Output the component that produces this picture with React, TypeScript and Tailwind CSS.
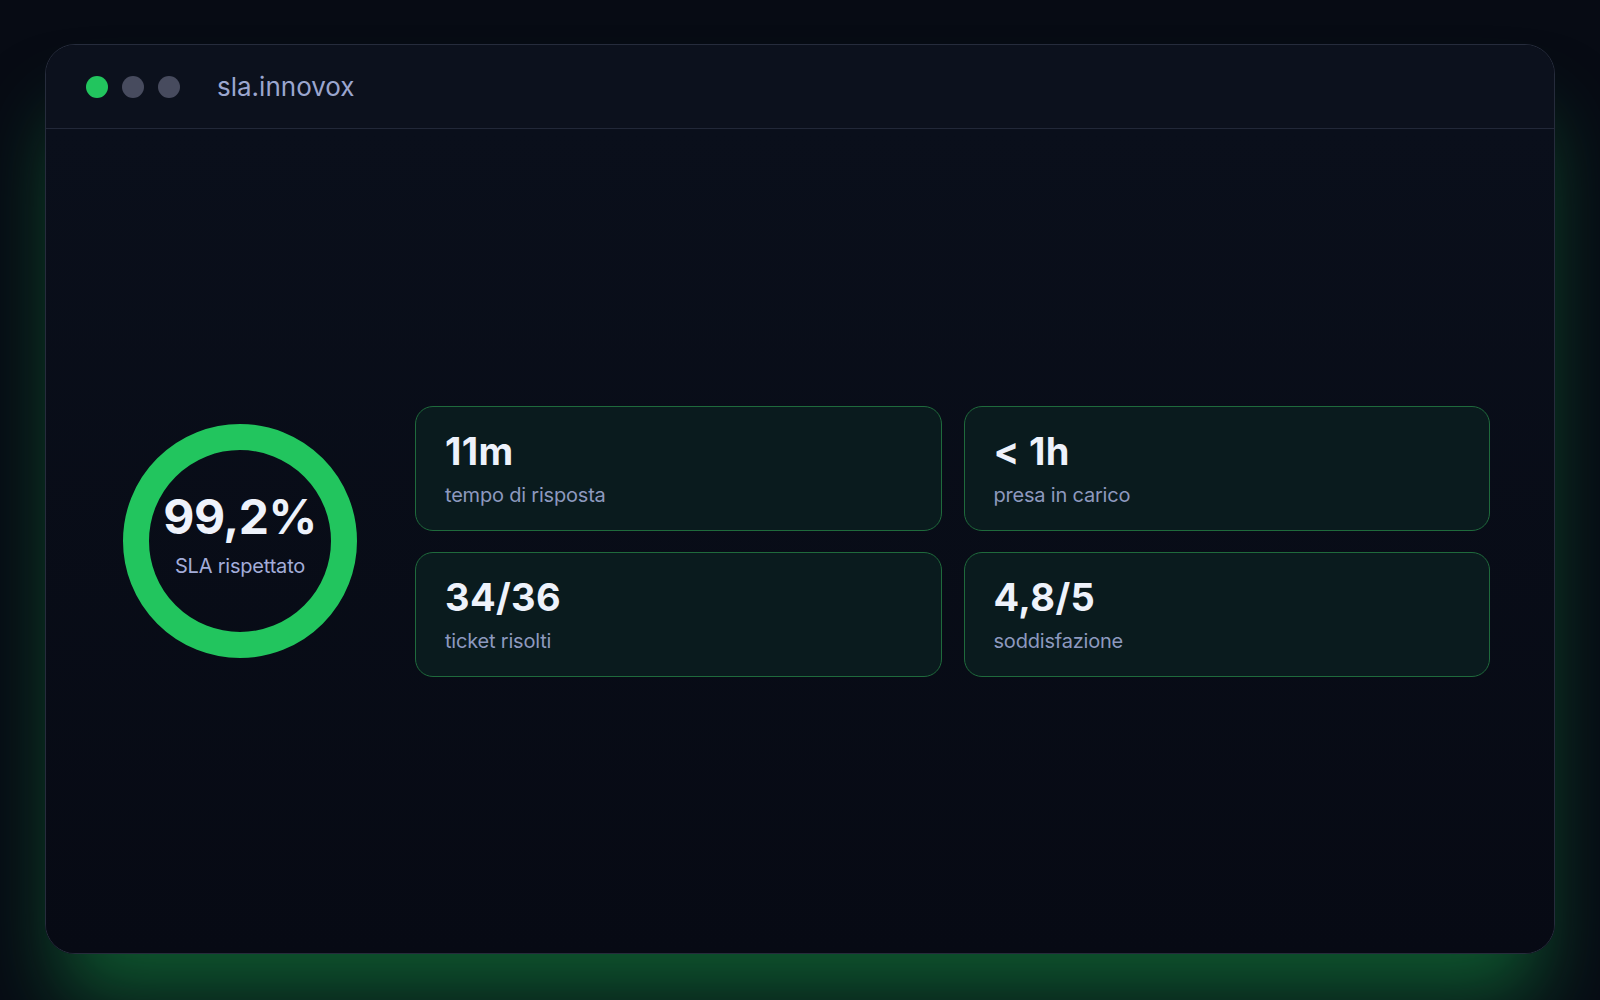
import React from 'react';

const STATS = [
  { value: '11m', label: 'tempo di risposta' },
  { value: '< 1h', label: 'presa in carico' },
  { value: '34/36', label: 'ticket risolti' },
  { value: '4,8/5', label: 'soddisfazione' },
];

const StatCard: React.FC<{ value: string; label: string }> = ({ value, label }) => (
  <div className="h-[125px] rounded-[18px] border border-[#1f6a3c] bg-[#0a1b1e] px-[29px] pt-[25px]">
    <div className="text-[38px] leading-none font-bold tracking-[0.01em] text-[#eef2fb]">{value}</div>
    <div className="mt-[13px] text-[20px] leading-6 tracking-[-0.01em] text-[#8d99bf]">{label}</div>
  </div>
);

const App: React.FC = () => {
  return (
    <div
      className="min-h-screen w-full bg-[#070b14] px-[45px] pt-[44px] pb-[46px]"
      style={{ fontFamily: 'Inter, "Noto Sans", sans-serif' }}
    >
      <div className="flex h-[910px] flex-col overflow-hidden rounded-[30px] border border-[#262c3c] shadow-[0_60px_80px_-16px_rgba(22,163,74,0.5)]">
        {/* title bar */}
        <div className="flex h-[84px] shrink-0 items-center border-b border-[#222838] bg-[#0c111d] px-10">
          <div className="flex gap-[14px]">
            <span className="h-[22px] w-[22px] rounded-full bg-[#22c55e]" />
            <span className="h-[22px] w-[22px] rounded-full bg-[#474b5e]" />
            <span className="h-[22px] w-[22px] rounded-full bg-[#474b5e]" />
          </div>
          <span className="ml-[37px] text-[26px] text-[#9ba6cf]">sla.innovox</span>
        </div>

        {/* dashboard */}
        <div className="flex flex-1 items-center bg-gradient-to-b from-[#0a0f1b] to-[#070a14] px-16">
          <div className="flex w-[260px] shrink-0 justify-center">
            <div className="flex h-[234px] w-[234px] flex-col items-center justify-center rounded-full border-[26px] border-[#22c55e] pb-3">
              <div className="text-[48px] leading-none font-bold tracking-[-0.01em] text-[#eef2fb]">99,2%</div>
              <div className="mt-[13px] text-[20px] leading-6 tracking-[-0.01em] text-[#a3acd9]">SLA rispettato</div>
            </div>
          </div>
          <div className="ml-[45px] grid flex-1 grid-cols-2 gap-x-[22px] gap-y-[21px]">
            {STATS.map((s) => (
              <StatCard key={s.label} value={s.value} label={s.label} />
            ))}
          </div>
        </div>
      </div>
    </div>
  );
};

export default App;
